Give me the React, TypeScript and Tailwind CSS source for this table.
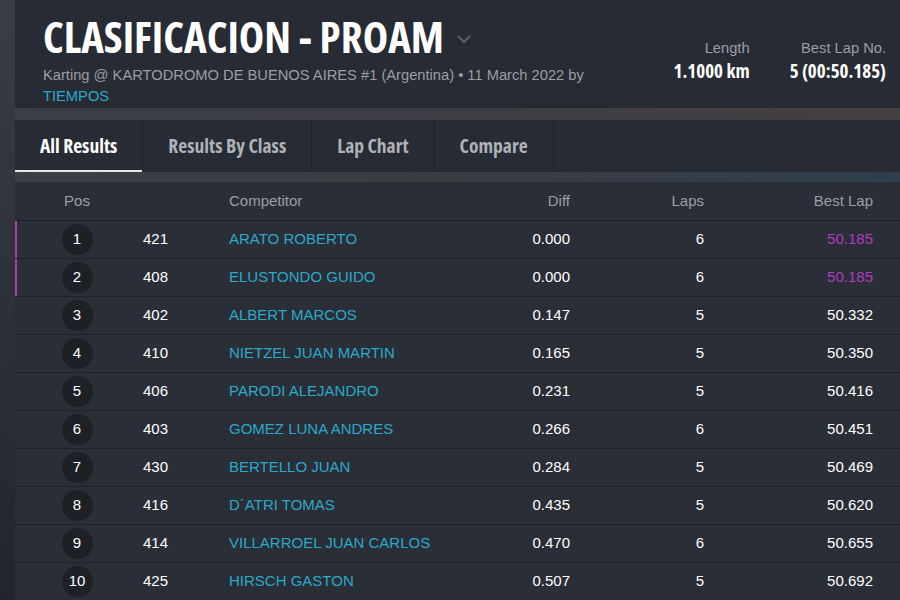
import React from 'react';

const rows = [
  { pos: 1, no: '421', name: 'ARATO ROBERTO', diff: '0.000', laps: 6, best: '50.185', fastest: true },
  { pos: 2, no: '408', name: 'ELUSTONDO GUIDO', diff: '0.000', laps: 6, best: '50.185', fastest: true },
  { pos: 3, no: '402', name: 'ALBERT MARCOS', diff: '0.147', laps: 5, best: '50.332' },
  { pos: 4, no: '410', name: 'NIETZEL JUAN MARTIN', diff: '0.165', laps: 5, best: '50.350' },
  { pos: 5, no: '406', name: 'PARODI ALEJANDRO', diff: '0.231', laps: 5, best: '50.416' },
  { pos: 6, no: '403', name: 'GOMEZ LUNA ANDRES', diff: '0.266', laps: 6, best: '50.451' },
  { pos: 7, no: '430', name: 'BERTELLO JUAN', diff: '0.284', laps: 5, best: '50.469' },
  { pos: 8, no: '416', name: 'D´ATRI TOMAS', diff: '0.435', laps: 5, best: '50.620' },
  { pos: 9, no: '414', name: 'VILLARROEL JUAN CARLOS', diff: '0.470', laps: 6, best: '50.655' },
  { pos: 10, no: '425', name: 'HIRSCH GASTON', diff: '0.507', laps: 5, best: '50.692' },
];

const tabs = ['All Results', 'Results By Class', 'Lap Chart', 'Compare'];

// condensed headline face
const cond = "font-['Open_Sans',sans-serif] [font-stretch:75%]";

export default function App() {
  return (
    <div className="w-[900px] h-[600px] overflow-hidden bg-gradient-to-b from-[#3a3d44] to-[#22252b] pl-[15px] font-['Liberation_Sans',Arial,sans-serif]">
      {/* header */}
      <div className="h-[108px] bg-[#272b33] flex justify-between pl-[28px] pr-[14px]">
        <div className="pt-[12px]">
          <div className="flex items-center gap-[12px]">
            <h1 className={`${cond} font-bold text-[43px] leading-[50px] text-white`}>CLASIFICACION - PROAM</h1>
            <svg width="16" height="10" viewBox="0 0 16 10" className="mt-[4px]">
              <polyline points="2,2 8,8 14,2" fill="none" stroke="#5c6068" strokeWidth="2" />
            </svg>
          </div>
          <p className="text-[14.7px] leading-[21px] text-[#9a9ea5] w-[570px] mt-[3px]">
            Karting @ KARTODROMO DE BUENOS AIRES #1 (Argentina) • 11 March 2022 by <span className="text-[#2aa9c9]">TIEMPOS</span>
          </p>
        </div>
        <div className="flex gap-[40px] pt-[38px] text-right">
          <div>
            <div className="text-[14.7px] leading-[20px] text-[#9a9ea5]">Length</div>
            <div className={`${cond} font-bold text-[19px] leading-[26px] text-white`}>1.1000 km</div>
          </div>
          <div>
            <div className="text-[14.7px] leading-[20px] text-[#9a9ea5]">Best Lap No.</div>
            <div className={`${cond} font-bold text-[19px] leading-[26px] text-white`}>5 (00:50.185)</div>
          </div>
        </div>
      </div>
      <div className="h-[12px] bg-gradient-to-r from-[#3c3f46] via-[#3d3e44] to-[#443f42]" />

      {/* tabs */}
      <div className="h-[52px] bg-[#272b33] flex">
        {tabs.map((t, i) => (
          <div
            key={t}
            className={`${cond} font-bold text-[19.5px] flex items-center px-[25px] border-r border-[#1f2228] ${
              i === 0 ? 'text-white shadow-[inset_0_-2px_0_#e6e6e6]' : 'text-[#aeb2b8]'
            }`}
          >
            {t}
          </div>
        ))}
      </div>
      <div className="h-[10px] bg-gradient-to-r from-[#3c3f46] via-[#3b3d43] to-[#2f3d4c]" />

      {/* table */}
      <div className="bg-[#2a2e36] text-[15px]">
        <div className="h-[39px] grid grid-cols-[124px_90px_241px_100px_134px_169px] items-center text-[#9a9ea5] border-b border-[#1e2127]">
          <div className="text-center">Pos</div>
          <div />
          <div>Competitor</div>
          <div className="text-right">Diff</div>
          <div className="text-right">Laps</div>
          <div className="text-right">Best Lap</div>
        </div>
        {rows.map((r) => (
          <div
            key={r.pos}
            className={`h-[38px] grid grid-cols-[124px_90px_241px_100px_134px_169px] items-center border-b border-[#1e2127] ${
              r.fastest ? 'shadow-[inset_2px_0_0_#a93bb6]' : ''
            }`}
          >
            <div className="flex justify-center">
              <div className="w-[31px] h-[31px] rounded-full bg-[#1d2025] flex items-center justify-center text-white">
                {r.pos}
              </div>
            </div>
            <div className="text-white pl-[4px]">{r.no}</div>
            <div className="text-[#2aa9c9]">{r.name}</div>
            <div className="text-right text-white">{r.diff}</div>
            <div className="text-right text-white">{r.laps}</div>
            <div className={`text-right ${r.fastest ? 'text-[#b03cc0]' : 'text-white'}`}>{r.best}</div>
          </div>
        ))}
      </div>
    </div>
  );
}
